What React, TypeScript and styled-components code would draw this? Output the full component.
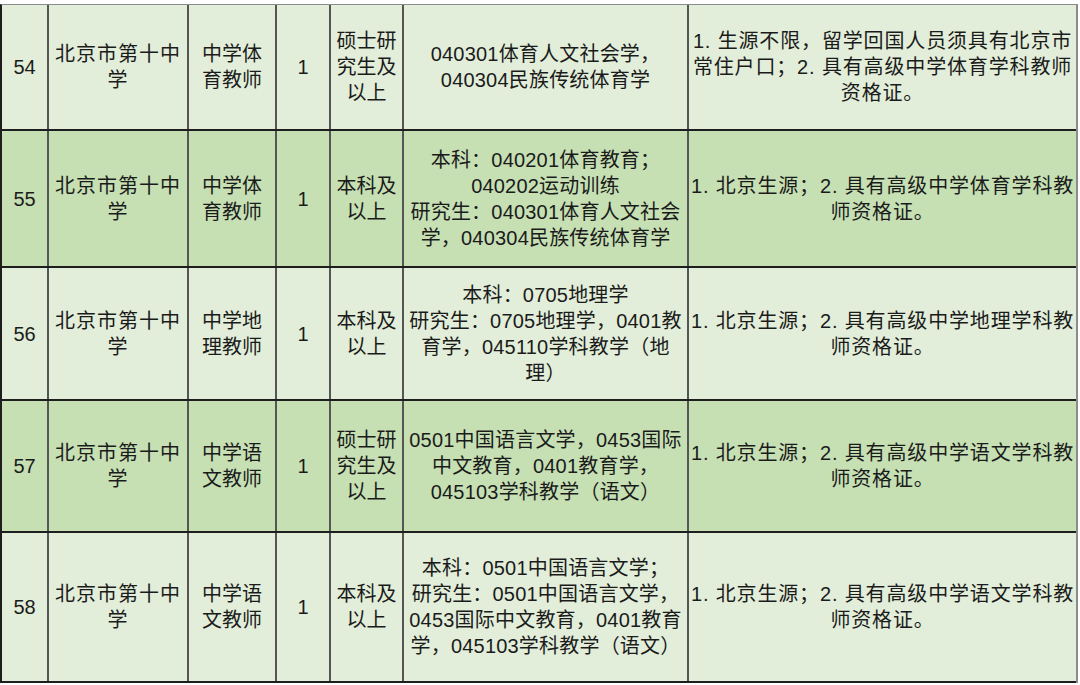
import React from 'react';
import styled, { createGlobalStyle } from 'styled-components';

type Job = {
  no: string;
  unit: string[];
  post: string[];
  count: string;
  degree: string[];
  major: string[];
  need: string[];
  height: number;
  shade: boolean;
};

const jobs: Job[] = [
  {
    no: '54',
    unit: ['北京市第十中', '学'],
    post: ['中学体', '育教师'],
    count: '1',
    degree: ['硕士研', '究生及', '以上'],
    major: ['040301体育人文社会学，', '040304民族传统体育学'],
    need: ['1. 生源不限，留学回国人员须具有北京市', '常住户口；2. 具有高级中学体育学科教师', '资格证。'],
    height: 126,
    shade: false,
  },
  {
    no: '55',
    unit: ['北京市第十中', '学'],
    post: ['中学体', '育教师'],
    count: '1',
    degree: ['本科及', '以上'],
    major: ['本科：040201体育教育；', '040202运动训练', '研究生：040301体育人文社会', '学，040304民族传统体育学'],
    need: ['1. 北京生源；2. 具有高级中学体育学科教', '师资格证。'],
    height: 137,
    shade: true,
  },
  {
    no: '56',
    unit: ['北京市第十中', '学'],
    post: ['中学地', '理教师'],
    count: '1',
    degree: ['本科及', '以上'],
    major: ['本科：0705地理学', '研究生：0705地理学，0401教', '育学，045110学科教学（地', '理）'],
    need: ['1. 北京生源；2. 具有高级中学地理学科教', '师资格证。'],
    height: 133,
    shade: false,
  },
  {
    no: '57',
    unit: ['北京市第十中', '学'],
    post: ['中学语', '文教师'],
    count: '1',
    degree: ['硕士研', '究生及', '以上'],
    major: ['0501中国语言文学，0453国际', '中文教育，0401教育学，', '045103学科教学（语文）'],
    need: ['1. 北京生源；2. 具有高级中学语文学科教', '师资格证。'],
    height: 132,
    shade: true,
  },
  {
    no: '58',
    unit: ['北京市第十中', '学'],
    post: ['中学语', '文教师'],
    count: '1',
    degree: ['本科及', '以上'],
    major: ['本科：0501中国语言文学；', '研究生：0501中国语言文学，', '0453国际中文教育，0401教育', '学，045103学科教学（语文）'],
    need: ['1. 北京生源；2. 具有高级中学语文学科教', '师资格证。'],
    height: 150,
    shade: false,
  },
];

const GlobalStyle = createGlobalStyle`
  html, body {
    margin: 0;
    padding: 0;
    background: #ffffff;
  }
  body {
    font-family: 'Liberation Sans', 'Noto Sans CJK SC', sans-serif;
    color: #1b1b1b;
  }
`;

const Lines: React.FC<{ lines: string[] }> = ({ lines }) => (
  <>
    {lines.map((l, i) => (
      <Line key={i}>{l}</Line>
    ))}
  </>
);

const App: React.FC = () => {
  return (
    <>
      <GlobalStyle />
      <Table>
        {jobs.map((job) => (
          <Row key={job.no} $h={job.height} $shade={job.shade}>
            <Cell>{job.no}</Cell>
            <Cell $spacing={1}>
              <Lines lines={job.unit} />
            </Cell>
            <Cell>
              <Lines lines={job.post} />
            </Cell>
            <Cell>{job.count}</Cell>
            <Cell>
              <Lines lines={job.degree} />
            </Cell>
            <Cell $spacing={0.2}>
              <Lines lines={job.major} />
            </Cell>
            <Cell $last $spacing={0.85}>
              <Lines lines={job.need} />
            </Cell>
          </Row>
        ))}
      </Table>
    </>
  );
};

export default App;

const Table = styled.div`
  display: flex;
  flex-direction: column;
  width: 1078px;
  margin-top: 4px;
  border-top: 1px solid #8a8a8a;
  border-left: 2px solid #1e1e1e;
  border-right: 2px solid #8c8c8c;
  box-sizing: border-box;
`;

const Row = styled.div<{ $h: number; $shade: boolean }>`
  display: grid;
  grid-template-columns: 47px 140px 88px 54px 73px 285px 1fr;
  height: ${(p) => p.$h}px;
  box-sizing: border-box;
  border-bottom: 2px solid #1e1e1e;
  background: ${(p) => (p.$shade ? '#c6e0b4' : '#e2eed9')};
`;

const Cell = styled.div<{ $last?: boolean; $spacing?: number }>`
  display: flex;
  flex-direction: column;
  justify-content: center;
  align-items: center;
  box-sizing: border-box;
  border-right: ${(p) => (p.$last ? 'none' : '2px solid #555')};
  font-size: 20px;
  line-height: 26px;
  letter-spacing: ${(p) => p.$spacing ?? 0}px;
  text-align: center;
  white-space: nowrap;
  overflow: hidden;
`;

const Line = styled.span`
  display: block;
`;
